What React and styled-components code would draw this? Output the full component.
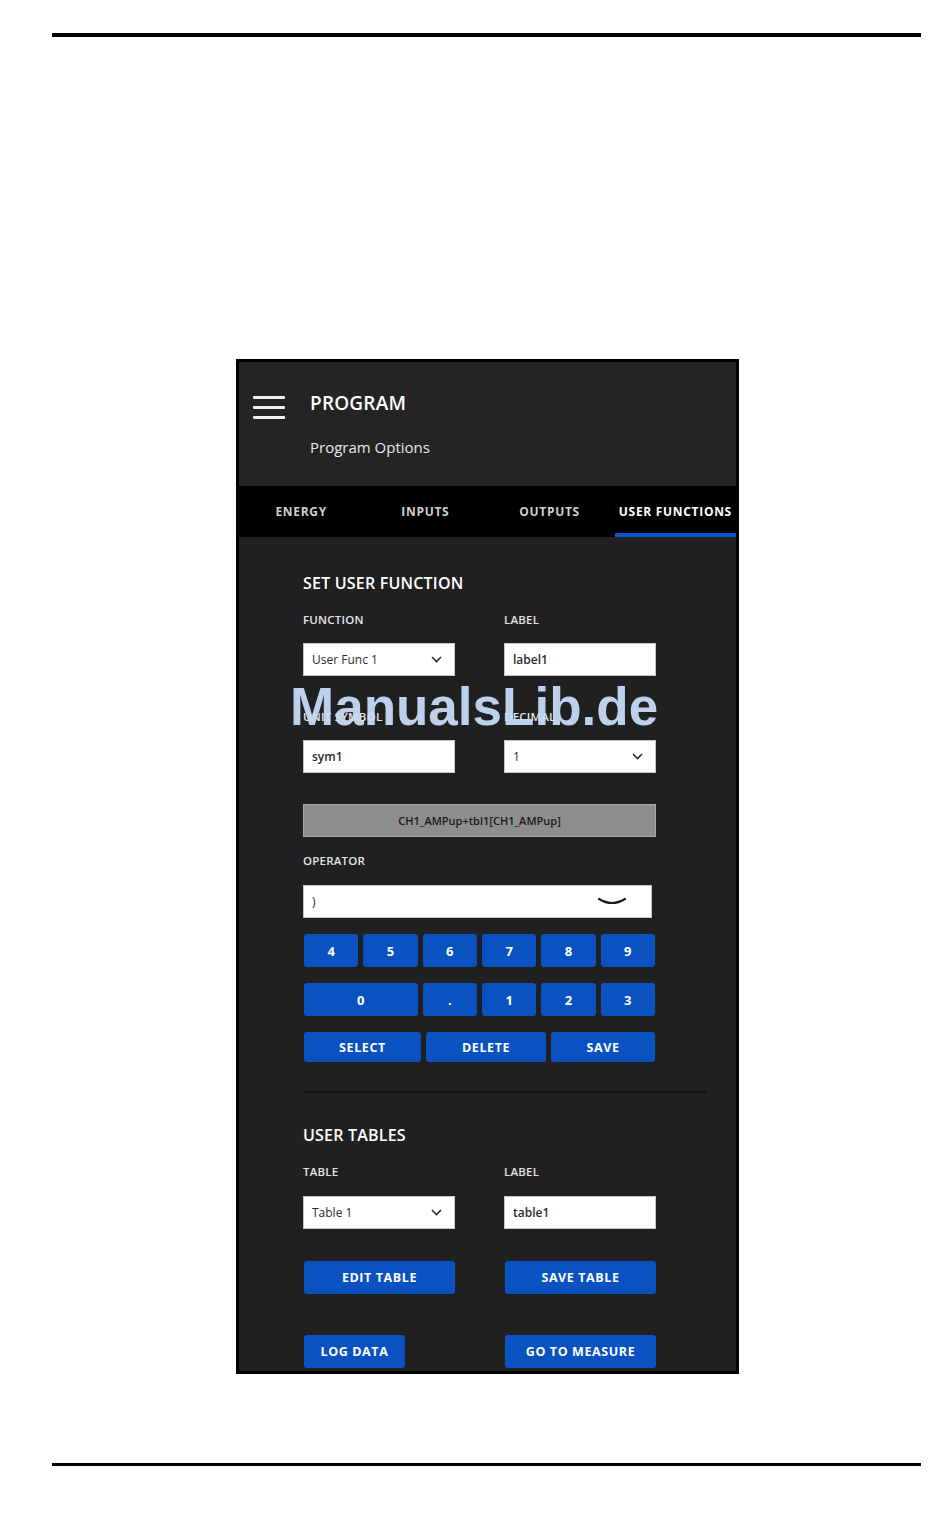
import React from "react";
import styled, { createGlobalStyle } from "styled-components";

const Global = createGlobalStyle`
  html, body { margin: 0; padding: 0; background: #fff; }
  body { font-family: "Open Sans", "Noto Sans", sans-serif; }
  * { box-sizing: border-box; }
`;

const Page = styled.div`
  width: 950px;
  height: 1514px;
  padding-top: 33px;
  position: relative;
  overflow: hidden;
`;

const Rule = styled.div`
  margin-left: 52px;
  width: 869px;
  height: ${(p) => p.$h}px;
  background: #000;
`;

const Frame = styled.div`
  position: relative;
  margin: 322px 0 0 236px;
  width: 503px;
  height: 1015px;
  border: 3px solid #000;
  background: #202020;
  display: flex;
  flex-direction: column;
  overflow: hidden;
`;

const Header = styled.div`
  height: 124px;
  background: #242424;
  display: flex;
  padding: 29px 0 0 14px;
  gap: 25px;
`;

const Burger = styled.div`
  width: 32px;
  margin-top: 5px;
  display: flex;
  flex-direction: column;
  gap: 7px;
  span {
    display: block;
    height: 3px;
    background: #f0f0f0;
    border-radius: 1px;
  }
`;

const TitleCol = styled.div`
  display: flex;
  flex-direction: column;
`;

const Title = styled.div`
  color: #fff;
  font-size: 19px;
  font-weight: 600;
  line-height: 24px;
  letter-spacing: 0.2px;
`;

const Subtitle = styled.div`
  margin-top: 22px;
  color: #e8e8e8;
  font-size: 15px;
  line-height: 20px;
`;

const Tabs = styled.div`
  height: 51px;
  background: #000;
  display: grid;
  grid-template-columns: repeat(4, 1fr);
`;

const Tab = styled.div`
  display: flex;
  align-items: center;
  justify-content: center;
  padding-top: 4px;
  border-bottom: 4px solid ${(p) => (p.$active ? "#0b55c8" : "transparent")};
  color: ${(p) => (p.$active ? "#fff" : "#cfcfcf")};
  font-size: 12px;
  font-weight: 700;
  letter-spacing: 0.7px;
  white-space: nowrap;
  margin-left: ${(p) => (p.$active ? "3px" : "0")};
`;

const Content = styled.div`
  flex: 1;
  padding: 36px 0 0 64px;
  display: flex;
  flex-direction: column;
`;

const SectionTitle = styled.div`
  color: #fff;
  font-size: 16px;
  font-weight: 600;
  line-height: 20px;
  letter-spacing: 0.2px;
  margin-top: ${(p) => p.$mt || 0}px;
`;

const FieldGrid = styled.div`
  display: grid;
  grid-template-columns: 152px 152px;
  column-gap: 49px;
  row-gap: 34px;
  margin-top: ${(p) => p.$mt || 0}px;
`;

const Field = styled.div`
  display: flex;
  flex-direction: column;
`;

const Label = styled.div`
  color: #e4e4e4;
  font-size: 11.5px;
  font-weight: 600;
  line-height: 14px;
  letter-spacing: 0.2px;
  margin-bottom: ${(p) => p.$mb ?? 16}px;
  margin-top: ${(p) => p.$mt || 0}px;
`;

const Box = styled.div`
  height: 33px;
  width: ${(p) => (p.$w ? `${p.$w}px` : "100%")};
  background: #fff;
  border: 1px solid #c4c4c4;
  padding: 0 ${(p) => p.$pr ?? 12}px 0 8px;
  display: flex;
  align-items: center;
  justify-content: space-between;
  color: #2a2a2a;
  font-size: 12px;
  font-weight: ${(p) => (p.$bold ? 600 : 400)};
`;

const Formula = styled.div`
  margin-top: 31px;
  width: 353px;
  height: 33px;
  background: #8e8e8e;
  border: 1px solid #a8a8a8;
  display: flex;
  align-items: center;
  justify-content: center;
  color: #1a1a1a;
  font-size: 11px;
  font-weight: 600;
`;

const Keypad = styled.div`
  margin-top: 16px;
  width: 351px;
  display: grid;
  grid-template-columns: repeat(6, 1fr);
  column-gap: 5px;
  row-gap: 16px;
  margin-left: 1px;
`;

const Key = styled.div`
  grid-column: span ${(p) => p.$span || 1};
  height: 33px;
  background: #0a52c2;
  border-radius: 3px;
  display: flex;
  align-items: center;
  justify-content: center;
  color: #fff;
  font-size: 13px;
  font-weight: 700;
`;

const ActionRow = styled.div`
  margin-top: 16px;
  margin-left: 1px;
  display: flex;
  gap: 5px;
`;

const Btn = styled.div`
  width: ${(p) => p.$w}px;
  height: ${(p) => p.$h || 33}px;
  background: #0a52c2;
  border-radius: 3px;
  display: flex;
  align-items: center;
  justify-content: center;
  color: #fff;
  font-size: 12.5px;
  font-weight: 700;
  letter-spacing: 0.6px;
  white-space: nowrap;
`;

const Divider = styled.div`
  margin-top: 29px;
  width: 403px;
  height: 2px;
  background: #111;
`;

const ButtonGrid = styled.div`
  display: grid;
  grid-template-columns: 152px 152px;
  column-gap: 49px;
  margin-top: ${(p) => p.$mt}px;
  margin-left: 1px;
`;

const Watermark = styled.div`
  position: absolute;
  left: 51px;
  top: 318px;
  font-family: "Liberation Sans", Arial, sans-serif;
  font-weight: 700;
  font-size: 53px;
  line-height: 53px;
  color: rgba(198, 219, 248, 0.95);
  white-space: nowrap;
  pointer-events: none;
`;

const BottomGap = styled.div`
  height: 89px;
`;

const Chevron = ({ wide }) =>
  wide ? (
    <svg width="28" height="9" viewBox="0 0 28 9">
      <path d="M1 2 Q14 10 27 2" fill="none" stroke="#1c1c1c" strokeWidth="2.2" strokeLinecap="round" />
    </svg>
  ) : (
    <svg width="11" height="7" viewBox="0 0 11 7">
      <polyline points="1,1 5.5,5.5 10,1" fill="none" stroke="#2a2a2a" strokeWidth="1.6" />
    </svg>
  );

export default function App() {
  return (
    <Page>
      <Global />
      <Rule $h={4} />
      <Frame>
        <Header>
          <Burger>
            <span />
            <span />
            <span />
          </Burger>
          <TitleCol>
            <Title>PROGRAM</Title>
            <Subtitle>Program Options</Subtitle>
          </TitleCol>
        </Header>
        <Tabs>
          <Tab>ENERGY</Tab>
          <Tab>INPUTS</Tab>
          <Tab>OUTPUTS</Tab>
          <Tab $active>USER FUNCTIONS</Tab>
        </Tabs>
        <Content>
          <SectionTitle>SET USER FUNCTION</SectionTitle>
          <FieldGrid $mt={20}>
            <Field>
              <Label>FUNCTION</Label>
              <Box>
                User Func 1 <Chevron />
              </Box>
            </Field>
            <Field>
              <Label>LABEL</Label>
              <Box $bold>label1</Box>
            </Field>
            <Field>
              <Label>UNIT SYMBOL</Label>
              <Box $bold>sym1</Box>
            </Field>
            <Field>
              <Label>DECIMAL</Label>
              <Box>
                1 <Chevron />
              </Box>
            </Field>
          </FieldGrid>
          <Formula>CH1_AMPup+tbl1[CH1_AMPup]</Formula>
          <Label $mt={17} $mb={17}>OPERATOR</Label>
          <Box $w={349} $pr={25}>
            ) <Chevron wide />
          </Box>
          <Keypad>
            {["4", "5", "6", "7", "8", "9"].map((k) => (
              <Key key={k}>{k}</Key>
            ))}
            <Key $span={2}>0</Key>
            {[".", "1", "2", "3"].map((k) => (
              <Key key={"b" + k}>{k}</Key>
            ))}
          </Keypad>
          <ActionRow>
            <Btn $w={117} $h={30}>SELECT</Btn>
            <Btn $w={120} $h={30}>DELETE</Btn>
            <Btn $w={104} $h={30}>SAVE</Btn>
          </ActionRow>
          <Divider />
          <SectionTitle $mt={32}>USER TABLES</SectionTitle>
          <FieldGrid $mt={20}>
            <Field>
              <Label $mb={17}>TABLE</Label>
              <Box>
                Table 1 <Chevron />
              </Box>
            </Field>
            <Field>
              <Label $mb={17}>LABEL</Label>
              <Box $bold>table1</Box>
            </Field>
          </FieldGrid>
          <ButtonGrid $mt={32}>
            <Btn $w={151}>EDIT TABLE</Btn>
            <Btn $w={151}>SAVE TABLE</Btn>
          </ButtonGrid>
          <ButtonGrid $mt={41}>
            <Btn $w={101}>LOG DATA</Btn>
            <Btn $w={151}>GO TO MEASURE</Btn>
          </ButtonGrid>
        </Content>
        <Watermark>ManualsLib.de</Watermark>
      </Frame>
      <BottomGap />
      <Rule $h={3} />
    </Page>
  );
}
